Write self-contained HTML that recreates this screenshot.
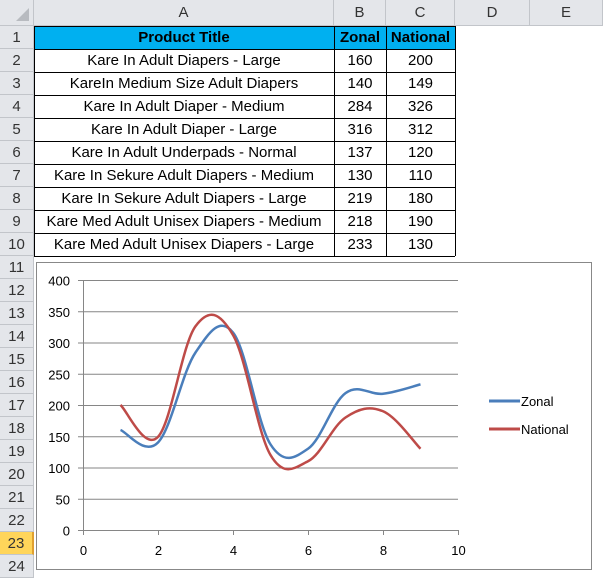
<!DOCTYPE html><html><head><style>
body{margin:0;width:603px;height:577px;overflow:hidden;background:#fff;font-family:"Liberation Sans",Calibri,sans-serif;position:relative}
.a{position:absolute;box-sizing:border-box}
.hd{background:#e4e6ea;color:#333;font-size:14px;text-align:center;border-right:1px solid #c2c5ca;border-bottom:1px solid #c2c5ca}
.c{font-size:15px;text-align:center;color:#000;line-height:23px}
</style></head><body>
<div class="a hd" style="left:0;top:0;width:34px;height:26px"><div style="position:absolute;right:4px;bottom:4px;width:0;height:0;border-left:13px solid transparent;border-bottom:13px solid #b8bbc0"></div></div>
<div class="a hd" style="left:34px;top:0;width:300px;height:26px;line-height:26px;font-size:15px">A</div>
<div class="a hd" style="left:334px;top:0;width:52px;height:26px;line-height:26px;font-size:15px">B</div>
<div class="a hd" style="left:386px;top:0;width:69px;height:26px;line-height:26px;font-size:15px">C</div>
<div class="a hd" style="left:455px;top:0;width:75px;height:26px;line-height:26px;font-size:15px">D</div>
<div class="a hd" style="left:530px;top:0;width:73px;height:26px;line-height:26px;font-size:15px">E</div>
<div id="rows"></div>
<div class="a" style="left:34px;top:26px;width:421px;height:23px;background:#00b0f0"></div>
<div class="a c" style="left:34px;top:26px;width:300px;font-weight:bold">Product Title</div>
<div class="a c" style="left:334px;top:26px;width:52px;font-weight:bold">Zonal</div>
<div class="a c" style="left:386px;top:26px;width:69px;font-weight:bold">National</div>
<svg class="a" style="left:0;top:0" width="603" height="577" id="tbl"></svg>
<div class="a" style="left:36px;top:262px;width:556px;height:308px;border:1px solid #888;background:#fff"></div>
<svg class="a" style="left:0;top:0" width="603" height="577" id="ch" font-family="Liberation Sans, sans-serif" font-size="13"></svg>
<script>
var data=[["Kare In Adult Diapers - Large",160,200],["KareIn Medium Size Adult Diapers",140,149],["Kare In Adult Diaper - Medium",284,326],["Kare In Adult Diaper - Large",316,312],["Kare In Adult Underpads - Normal",137,120],["Kare In Sekure Adult Diapers - Medium",130,110],["Kare In Sekure Adult Diapers - Large",219,180],["Kare Med Adult Unisex Diapers - Medium",218,190],["Kare Med Adult Unisex Diapers - Large",233,130]];
var h='';
for(var r=1;r<=24;r++){var t=26+23*(r-1);h+='<div class="a hd" style="left:0;top:'+t+'px;width:34px;height:23px;line-height:23px;font-size:15px;'+(r==23?'background:#ffd55a;border-right:2px solid #e0a030;color:#333':'')+'">'+r+'</div>';}
data.forEach(function(d,i){var t=26+23*(i+1);h+='<div class="a c" style="left:34px;top:'+t+'px;width:300px">'+d[0]+'</div><div class="a c" style="left:334px;top:'+t+'px;width:52px">'+d[1]+'</div><div class="a c" style="left:386px;top:'+t+'px;width:69px">'+d[2]+'</div>';});
document.getElementById('rows').innerHTML=h;
var s='';
for(var r=0;r<=10;r++){var y=26+23*r+0.5;s+='<line x1="34" x2="455" y1="'+y+'" y2="'+y+'" stroke="#000"/>';}
[34,334,386,455].forEach(function(x){s+='<line x1="'+(x+0.5)+'" x2="'+(x+0.5)+'" y1="26" y2="256" stroke="#000"/>';});
document.getElementById('tbl').innerHTML=s;
function px(x){return 83+37.5*x}function py(v){return 530-0.625*v}
var c='';
for(var v=0;v<=400;v+=50){var y=py(v)+0.5;c+='<line x1="78" x2="458" y1="'+y+'" y2="'+y+'" stroke="#868686"/><text x="70" y="'+(y+5)+'" text-anchor="end">'+v+'</text>';}
c+='<line x1="83.5" x2="83.5" y1="280" y2="535" stroke="#868686"/>';
for(var x=0;x<=10;x+=2){var X=px(x)+0.5;c+='<line x1="'+X+'" x2="'+X+'" y1="530" y2="535" stroke="#868686"/><text x="'+X+'" y="555" text-anchor="middle">'+x+'</text>';}
function path(k){var p=data.map(function(d,i){return [px(i+1),py(d[k])]});var s='M'+p[0];var T=0.18;
for(var i=0;i<p.length-1;i++){var p0=p[i-1]||p[i],p1=p[i],p2=p[i+1],p3=p[i+2]||p2;
s+=' C'+(p1[0]+(p2[0]-p0[0])*T)+','+(p1[1]+(p2[1]-p0[1])*T)+' '+(p2[0]-(p3[0]-p1[0])*T)+','+(p2[1]-(p3[1]-p1[1])*T)+' '+p2[0]+','+p2[1];}return s;}
c+='<path d="'+path(1)+'" fill="none" stroke="#4a7ebb" stroke-width="2.5"/>';
c+='<path d="'+path(2)+'" fill="none" stroke="#be4b48" stroke-width="2.5"/>';
c+='<line x1="489" x2="520" y1="401" y2="401" stroke="#4a7ebb" stroke-width="3"/><text x="521" y="406">Zonal</text>';
c+='<line x1="489" x2="520" y1="429" y2="429" stroke="#be4b48" stroke-width="3"/><text x="521" y="434">National</text>';
document.getElementById('ch').innerHTML=c;
</script>
</body></html>
